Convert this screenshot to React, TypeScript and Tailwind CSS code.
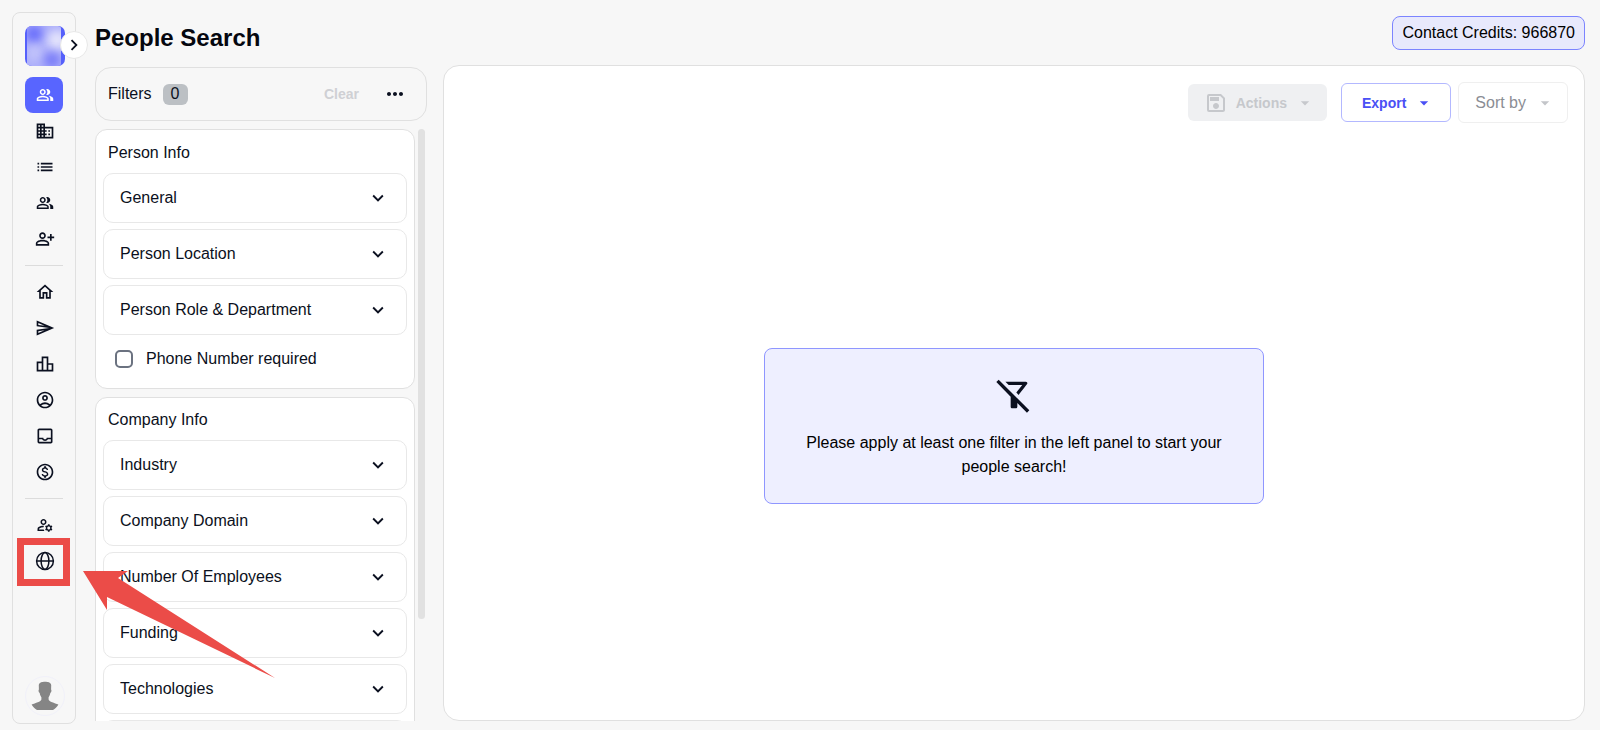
import React, { useState } from 'react';
import {
  MdOutlinePeopleAlt,
  MdBusiness,
  MdList,
  MdOutlinePersonAddAlt,
  MdOutlineHome,
  MdOutlineSend,
  MdOutlineLeaderboard,
  MdOutlineAccountCircle,
  MdOutlineInbox,
  MdOutlineMonetizationOn,
  MdOutlineManageAccounts,
  MdOutlineSave,
  MdOutlineFilterAltOff,
  MdArrowDropDown,
  MdChevronRight,
  MdExpandMore,
  MdMoreHoriz,
} from 'react-icons/md';
import { clsx } from 'clsx';

const GlobeIcon: React.FC = () => (
  <svg viewBox="0 0 20 20" className="h-5 w-5" fill="none" stroke="currentColor" strokeWidth="1.5">
    <circle cx="10" cy="10" r="8.4" />
    <ellipse cx="10" cy="10" rx="3.9" ry="8.4" />
    <path d="M1.6 10h16.8" />
  </svg>
);

const navGroups = [
  [
    { label: 'People Search', icon: MdOutlinePeopleAlt, small: true, active: true },
    { label: 'Company Search', icon: MdBusiness },
    { label: 'Lists', icon: MdList },
    { label: 'Contacts', icon: MdOutlinePeopleAlt, small: true },
    { label: 'Enrichment', icon: MdOutlinePersonAddAlt },
  ],
  [
    { label: 'Home', icon: MdOutlineHome },
    { label: 'Campaigns', icon: MdOutlineSend },
    { label: 'Analytics', icon: MdOutlineLeaderboard },
    { label: 'Accounts', icon: MdOutlineAccountCircle },
    { label: 'Inbox', icon: MdOutlineInbox },
    { label: 'Billing', icon: MdOutlineMonetizationOn },
  ],
];

const companyFilters = ['Industry', 'Company Domain', 'Number Of Employees', 'Funding', 'Technologies'];

const NavLink = ({ label, active, children }: { label: string; active?: boolean; children: React.ReactNode }) => (
  <a
    href="#"
    aria-label={label}
    className={clsx(
      'flex h-9 w-[38px] items-center justify-center rounded-lg pl-0.5',
      active ? 'bg-[#5865ff] text-white' : 'text-[#0b1020]'
    )}
  >
    {children}
  </a>
);

const FilterRow = ({ label }: { label: string }) => (
  <button
    type="button"
    className="flex h-[50px] w-full shrink-0 items-center justify-between rounded-[10px] border border-[#e8e8e8] bg-white pr-[17px] pl-4 text-left"
  >
    <span>{label}</span>
    <MdExpandMore className="h-[22px] w-[22px]" />
  </button>
);

const Logo = () => (
  <svg viewBox="0 0 40 40" className="ml-px h-10 w-10 shrink-0" aria-hidden="true">
    <defs>
      <filter id="soft" x="-60%" y="-60%" width="220%" height="220%">
        <feGaussianBlur stdDeviation="5" />
      </filter>
      <clipPath id="tile">
        <rect width="40" height="40" rx="7" />
      </clipPath>
      <clipPath id="face">
        <rect x="2" width="34" height="40" rx="3" />
      </clipPath>
    </defs>
    <g clipPath="url(#tile)">
      <rect width="40" height="40" fill="#5560fb" />
      <g clipPath="url(#face)">
        <rect width="40" height="40" fill="#adaffa" />
        <circle cx="9" cy="8" r="9" fill="#6a6ffb" filter="url(#soft)" />
        <circle cx="32" cy="14" r="10" fill="#e4e4fc" filter="url(#soft)" />
        <circle cx="10" cy="27" r="8" fill="#c3c5fb" filter="url(#soft)" />
        <circle cx="27" cy="34" r="8" fill="#777af8" filter="url(#soft)" />
      </g>
    </g>
  </svg>
);

const Sidebar = () => (
  <nav className="relative flex w-16 shrink-0 flex-col items-center rounded-lg border border-[#e0e0e0] pt-[13px] pb-[7px]">
    <Logo />
    <button
      type="button"
      aria-label="Expand menu"
      className="absolute top-[18px] -right-[13px] flex h-7 w-7 items-center justify-center rounded-full border border-[#e8e8e8] bg-white"
    >
      <MdChevronRight className="h-[22px] w-[22px] shrink-0" />
    </button>

    <div className="mt-[11px] flex flex-col">
      {navGroups[0].map(({ label, icon: Icon, active, small }) => (
        <NavLink key={label} label={label} active={active}>
          <Icon className={small ? 'h-[18px] w-[18px]' : 'h-5 w-5'} />
        </NavLink>
      ))}
    </div>
    <hr className="my-2 w-[38px] border-[#dcdcdc]" />
    <div className="flex flex-col">
      {navGroups[1].map(({ label, icon: Icon }) => (
        <NavLink key={label} label={label}>
          <Icon className="h-5 w-5" />
        </NavLink>
      ))}
    </div>
    <hr className="my-2 w-[38px] border-[#dcdcdc]" />
    <NavLink label="User settings">
      <MdOutlineManageAccounts className="h-[18px] w-[18px]" />
    </NavLink>
    <div className="relative">
      <NavLink label="Language">
        <GlobeIcon />
      </NavLink>
      {/* callout box and arrow */}
      <div className="pointer-events-none absolute -top-[5px] -right-[7px] -bottom-[7px] -left-2 border-[7px] border-[#eb4c48]" />
      <svg className="pointer-events-none absolute top-7 left-[58px] z-10 h-[108px] w-[192px]" viewBox="0 0 192 108">
        <path d="M0 0L45 0L35 7L192 107L24 26L24 39Z" fill="#eb4c48" />
      </svg>
    </div>

    <button type="button" aria-label="Profile" className="mt-auto ml-px flex h-10 w-10 items-center justify-center rounded-full border border-[#f1f1fa]">
      <svg viewBox="0 0 28 30" className="h-[30px] w-7" fill="#858585">
        <path d="M14 0.800C11 0.800 8.200 1.500 7.800 4L7.900 8.500C7.200 9 7.500 11.500 8.700 12C9 14 9.800 15.400 10.400 16.300V18.500C10 21 4.500 21.800 0.600 23.600C2 26.200 4 28 6 29H22C24 28 26 26.200 27.400 23.600C23.500 21.800 18 21 17.600 18.500V16.300C18.200 15.400 19 14 19.300 12C20.500 11.500 20.800 9 20.100 8.500L20.200 4C19.800 1.500 17 0.800 14 0.800Z" />
      </svg>
    </button>
  </nav>
);

export default function App() {
  const [phoneRequired, setPhoneRequired] = useState(false);

  return (
    <div className="flex h-screen overflow-hidden bg-[#f7f7f7] pt-3 pr-[15px] pb-[6px] pl-3 font-['Liberation_Sans',Arial,sans-serif] text-base text-[#0b1020]">
      <Sidebar />

      <div className="flex min-w-0 flex-1 flex-col pb-[3px] pl-[19px]">
        <header className="mb-4 flex h-[37px] shrink-0 items-start justify-between pt-1">
          <h1 className="pt-1.5 text-2xl leading-8 font-bold text-[#05070f]">People Search</h1>
          <div className="rounded-lg border border-[#7c84ff] bg-[#e8e9fc] px-[9px] py-1 leading-6 text-black">Contact Credits: 966870</div>
        </header>

        <div className="flex min-h-0 flex-1 gap-4">
          <section className="flex w-[332px] shrink-0 flex-col pt-0.5">
            <div className="mb-2 flex h-[54px] shrink-0 items-center rounded-2xl border border-[#e0e0e0] px-3">
              <span>Filters</span>
              <span className="ml-[11px] flex h-[21px] w-[25px] items-center justify-center rounded-md bg-[#bcc0c4]">0</span>
              <button type="button" disabled className="ml-auto text-sm font-bold text-[#cfd0d4]">
                Clear
              </button>
              <button type="button" aria-label="More" className="mr-[7px] ml-6">
                <MdMoreHoriz className="h-6 w-6" />
              </button>
            </div>

            <div className="flex min-h-0 flex-1 gap-[3px]">
              <div className="flex min-w-0 flex-1 flex-col gap-2 overflow-hidden">
                <div className="flex shrink-0 flex-col gap-[6px] rounded-xl border border-[#e0e0e0] bg-white px-[7px] pt-[9px] pb-[11px]">
                  <h2 className="px-[5px] leading-7">Person Info</h2>
                  <FilterRow label="General" />
                  <FilterRow label="Person Location" />
                  <FilterRow label="Person Role & Department" />
                  <label className="flex h-9 items-center gap-[13px] px-3">
                    <input
                      type="checkbox"
                      checked={phoneRequired}
                      onChange={(e) => setPhoneRequired(e.target.checked)}
                      className="h-[18px] w-[18px] appearance-none rounded-[5px] border-2 border-[#6b7280] bg-white checked:bg-[#5865ff]"
                    />
                    Phone Number required
                  </label>
                </div>
                <div className="flex shrink-0 flex-col gap-[6px] rounded-xl border border-[#e0e0e0] bg-white px-[7px] pt-2 pb-3">
                  <h2 className="px-[5px] leading-7">Company Info</h2>
                  {companyFilters.map((label) => (
                    <FilterRow key={label} label={label} />
                  ))}
                  <button
                    type="button"
                    aria-label="More company filters"
                    className="flex h-[50px] w-full items-center justify-end rounded-[10px] border border-[#e8e8e8] px-4"
                  >
                    <MdExpandMore className="h-[22px] w-[22px]" />
                  </button>
                </div>
              </div>
              <div className="mr-0.5 h-[490px] w-[7px] rounded bg-[#e1e1e1]" />
            </div>
          </section>

          <main className="flex min-w-0 flex-1 flex-col rounded-2xl border border-[#e0e0e0] bg-white">
            <div className="flex items-center justify-end px-4 pt-4">
              <button type="button" disabled className="mr-[14px] flex h-[37px] items-center rounded-md bg-[#eff0f2] pr-3 pl-4 text-sm font-bold text-[#c6c8cc]">
                <MdOutlineSave className="mr-2 h-6 w-6" />
                Actions
                <MdArrowDropDown className="ml-2 h-5 w-5" />
              </button>
              <button type="button" className="mr-[7px] flex h-[39px] items-center rounded-md border border-[#b3b8ff] pr-4 pl-5 text-sm font-bold text-[#4a50f5]">
                Export
                <MdArrowDropDown className="ml-2 h-5 w-5" />
              </button>
              <button type="button" className="flex h-[41px] items-center rounded-md border border-[#efefef] pr-3 pl-4 text-[#8b8d94]">
                Sort by
                <MdArrowDropDown className="ml-[9px] h-5 w-5 text-[#c3c5c9]" />
              </button>
            </div>

            <div className="flex flex-1 items-center justify-center pt-2">
              <div className="flex w-[500px] flex-col items-center rounded-lg border border-[#8f96ff] bg-[#eeefff] px-8 pt-[26px] pb-6">
                <MdOutlineFilterAltOff className="mb-4 h-10 w-10" />
                <p className="text-center leading-6 text-black">
                  Please apply at least one filter in the left panel to start your people search!
                </p>
              </div>
            </div>
          </main>
        </div>
      </div>
    </div>
  );
}
